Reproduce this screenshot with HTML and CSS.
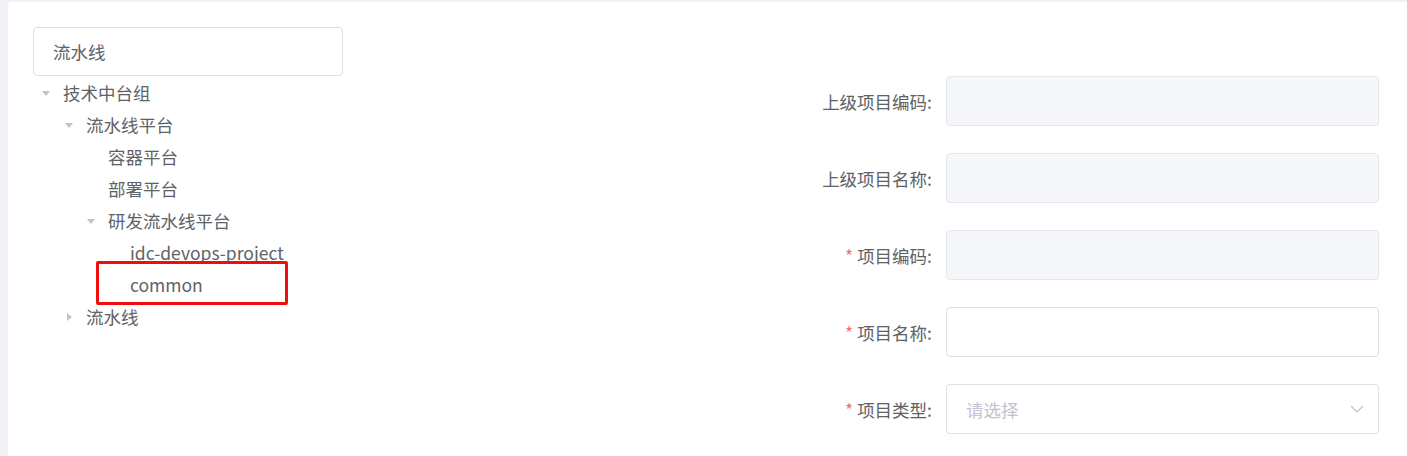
FILE: index.html
```html
<!DOCTYPE html>
<html lang="zh-CN">
<head>
<meta charset="utf-8">
<title>项目</title>
<link rel="stylesheet" href="styles.css">
</head>
<body>
<div class="card">
  <div class="left">
    <div class="search">流水线</div>
    <div class="tree">
      <div class="node lvl1"><span class="arrow"><span class="tri down"></span></span><span class="label">技术中台组</span></div>
      <div class="node lvl2"><span class="arrow"><span class="tri down"></span></span><span class="label">流水线平台</span></div>
      <div class="node lvl3"><span class="arrow"></span><span class="label">容器平台</span></div>
      <div class="node lvl3"><span class="arrow"></span><span class="label">部署平台</span></div>
      <div class="node lvl3"><span class="arrow"><span class="tri down"></span></span><span class="label">研发流水线平台</span></div>
      <div class="node lvl4"><span class="arrow"></span><span class="label">idc-devops-project</span></div>
      <div class="node lvl4"><span class="arrow"></span><span class="label">common</span></div>
      <div class="node lvl2"><span class="arrow"><span class="tri right"></span></span><span class="label">流水线</span></div>
      <div class="highlight"></div>
    </div>
  </div>
  <div class="form">
    <div class="row">
      <div class="flabel">上级项目编码:</div>
      <div class="field disabled"></div>
    </div>
    <div class="row">
      <div class="flabel">上级项目名称:</div>
      <div class="field disabled"></div>
    </div>
    <div class="row">
      <div class="flabel"><span class="req">*</span>项目编码:</div>
      <div class="field disabled"></div>
    </div>
    <div class="row">
      <div class="flabel"><span class="req">*</span>项目名称:</div>
      <div class="field"></div>
    </div>
    <div class="row">
      <div class="flabel"><span class="req">*</span>项目类型:</div>
      <div class="field select">
        <span class="placeholder">请选择</span>
        <svg class="chev" width="14" height="8" viewBox="0 0 14 8"><path d="M1 1 L7 7 L13 1" fill="none" stroke="#c0c4cc" stroke-width="1.2"/></svg>
      </div>
    </div>
  </div>
</div>
</body>
</html>
```

FILE: styles.css
```css
html, body {
  margin: 0;
  height: 100%;
  overflow: hidden;
}
body {
  background: #f0f2f5;
  padding: 2px 0 0 8px;
  box-sizing: border-box;
  font-family: "Noto Sans CJK SC", "Noto Sans", sans-serif;
  color: #606266;
  font-size: 17.5px;
}
.card {
  background: #fff;
  border-top-left-radius: 4px;
  height: 100%;
  display: flex;
  padding: 25px 28px 0 25px;
  box-sizing: border-box;
}
.left {
  width: 310px;
  flex: none;
}
.search {
  height: 49px;
  box-sizing: border-box;
  border: 1px solid #dcdfe6;
  border-radius: 4px;
  padding-left: 19px;
  display: flex;
  align-items: center;
  color: #606266;
}
.tree {
  position: relative;
  margin-top: 1px;
}
.node {
  height: 32px;
  display: flex;
  align-items: center;
  line-height: 1;
  white-space: nowrap;
}
.lvl1 { padding-left: 0; }
.lvl2 { padding-left: 23px; }
.lvl3 { padding-left: 45px; }
.lvl4 { padding-left: 67px; }
.arrow {
  width: 30px;
  flex: none;
  display: flex;
  align-items: center;
  padding-left: 9px;
  box-sizing: border-box;
}
.tri {
  width: 0;
  height: 0;
}
.tri.down {
  border-left: 4px solid transparent;
  border-right: 4px solid transparent;
  border-top: 5px solid #c0c4cc;
}
.tri.right {
  margin-left: 2px;
  border-top: 4px solid transparent;
  border-bottom: 4px solid transparent;
  border-left: 5px solid #c0c4cc;
}
.highlight {
  position: absolute;
  left: 63px;
  top: 184px;
  width: 192px;
  height: 44px;
  box-sizing: border-box;
  border: 3px solid #f20d0d;
  border-radius: 2px;
}
.form {
  flex: 1;
  margin-top: 49px;
}
.row {
  display: flex;
  align-items: center;
  height: 50px;
  margin-bottom: 27px;
}
.flabel {
  flex: 1;
  text-align: right;
  padding-right: 14px;
  white-space: nowrap;
}
.req {
  color: #f56c6c;
  margin-right: 4px;
}
.field {
  width: 433px;
  height: 50px;
  box-sizing: border-box;
  border: 1px solid #dcdfe6;
  border-radius: 4px;
  background: #fff;
}
.field.disabled {
  background: #f5f7fa;
  border-color: #e4e7ed;
}
.select {
  display: flex;
  align-items: center;
  justify-content: space-between;
  padding: 0 14px 0 19px;
}
.placeholder {
  color: #c0c4cc;
}
.chev {
  display: block;
}
```
